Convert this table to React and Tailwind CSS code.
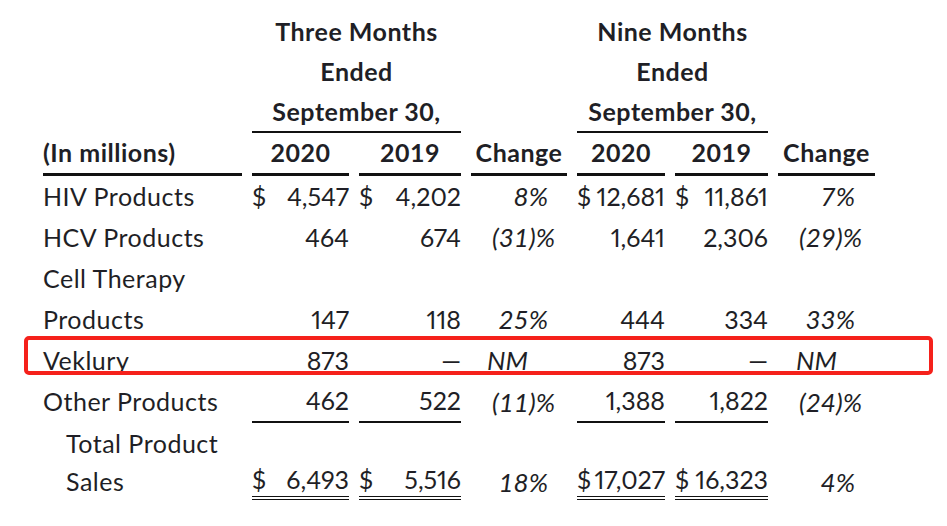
import React from "react";

const cols = "grid-cols-[199px_97px_102px_96px_88px_93px_97px]";

const rows = [
  { label: "HIV Products", a: ["$", "4,547"], b: ["$", "4,202"], c: "8%", cp: "pr-[19px]", d: ["$", "12,681"], e: ["$", "11,861"], f: "7%", fp: "pr-[20px]" },
  { label: "HCV Products", a: ["", "464"], b: ["", "674"], c: "(31)%", cp: "pr-[12px]", d: ["", "1,641"], e: ["", "2,306"], f: "(29)%", fp: "pr-[13px]" },
  { label: "Cell Therapy", blank: true },
  { label: "Products", a: ["", "147"], b: ["", "118"], c: "25%", cp: "pr-[19px]", d: ["", "444"], e: ["", "334"], f: "33%", fp: "pr-[20px]" },
  { label: "Veklury", a: ["", "873"], b: ["", "—"], c: "NM", cp: "pr-[39px]", d: ["", "873"], e: ["", "—"], f: "NM", fp: "pr-[38px]" },
  { label: "Other Products", a: ["", "462"], b: ["", "522"], c: "(11)%", cp: "pr-[12px]", d: ["", "1,388"], e: ["", "1,822"], f: "(24)%", fp: "pr-[13px]", line: "single" },
  { label: "Total Product", indent: true, blank: true },
  { label: "Sales", indent: true, a: ["$", "6,493"], b: ["$", "5,516"], c: "18%", cp: "pr-[19px]", d: ["$", "17,027"], e: ["$", "16,323"], f: "4%", fp: "pr-[20px]", line: "double" },
];

function Amount({ v, line, h }) {
  const border =
    line === "single"
      ? "border-b-2 border-[#111]"
      : line === "double"
      ? "border-b-4 border-double border-[#111]"
      : "";
  return (
    <div className={`flex items-center justify-between proportional-nums ${h} ${border}`}>
      <span>{v ? v[0] : ""}</span>
      <span>{v ? v[1] : ""}</span>
    </div>
  );
}

function Row({ r }) {
  const h = r.line === "double" ? "h-[36px]" : r.line === "single" ? "h-[42px]" : "h-[41px]";
  return (
    <>
      <div className={`flex items-center tracking-[0.5px] ${h} ${r.indent ? "pl-[23px]" : ""}`}>{r.label}</div>
      {r.blank ? (
        <>
          <div /><div /><div /><div /><div /><div />
        </>
      ) : (
        <>
          <Amount v={r.a} line={r.line} h={h} />
          <Amount v={r.b} line={r.line} h={h} />
          <div className={`flex items-center justify-end italic text-[26px] ${h} ${r.cp}`}>{r.c}</div>
          <Amount v={r.d} line={r.line} h={h} />
          <Amount v={r.e} line={r.line} h={h} />
          <div className={`flex items-center justify-end italic text-[26px] ${h} ${r.fp}`}>{r.f}</div>
        </>
      )}
    </>
  );
}

const head = "h-[43px] flex items-center font-bold border-b-[3px] border-[#111] tracking-[0.5px]";

export default function App() {
  return (
    <div
      className="relative w-[947px] h-[526px] bg-white text-[#1f1f26] text-[25px] overflow-hidden"
      style={{ fontFamily: "Lato, 'Liberation Sans', sans-serif" }}
    >
      <div className={`grid ${cols} gap-x-[10px] pl-[43px] pt-[11px]`}>
        <div />
        <div className="col-span-2 border-b-2 border-[#111] font-bold text-center leading-[40px] tracking-[0.5px]">
          <div>Three Months</div>
          <div>Ended</div>
          <div>September 30,</div>
        </div>
        <div />
        <div className="col-span-2 border-b-2 border-[#111] font-bold text-center leading-[40px] tracking-[0.5px]">
          <div>Nine Months</div>
          <div>Ended</div>
          <div>September 30,</div>
        </div>
        <div />

        <div className={head}>(In millions)</div>
        <div className={`${head} justify-center`}>2020</div>
        <div className={`${head} justify-center`}>2019</div>
        <div className={`${head} justify-center`}>Change</div>
        <div className={`${head} justify-center`}>2020</div>
        <div className={`${head} justify-center`}>2019</div>
        <div className={`${head} justify-center`}>Change</div>

        {rows.map((r) => (
          <Row key={r.label} r={r} />
        ))}
      </div>

      <div className="absolute left-[24px] top-[336px] w-[909px] h-[39px] border-4 border-[#f5211b] rounded-[5px]" />
    </div>
  );
}
